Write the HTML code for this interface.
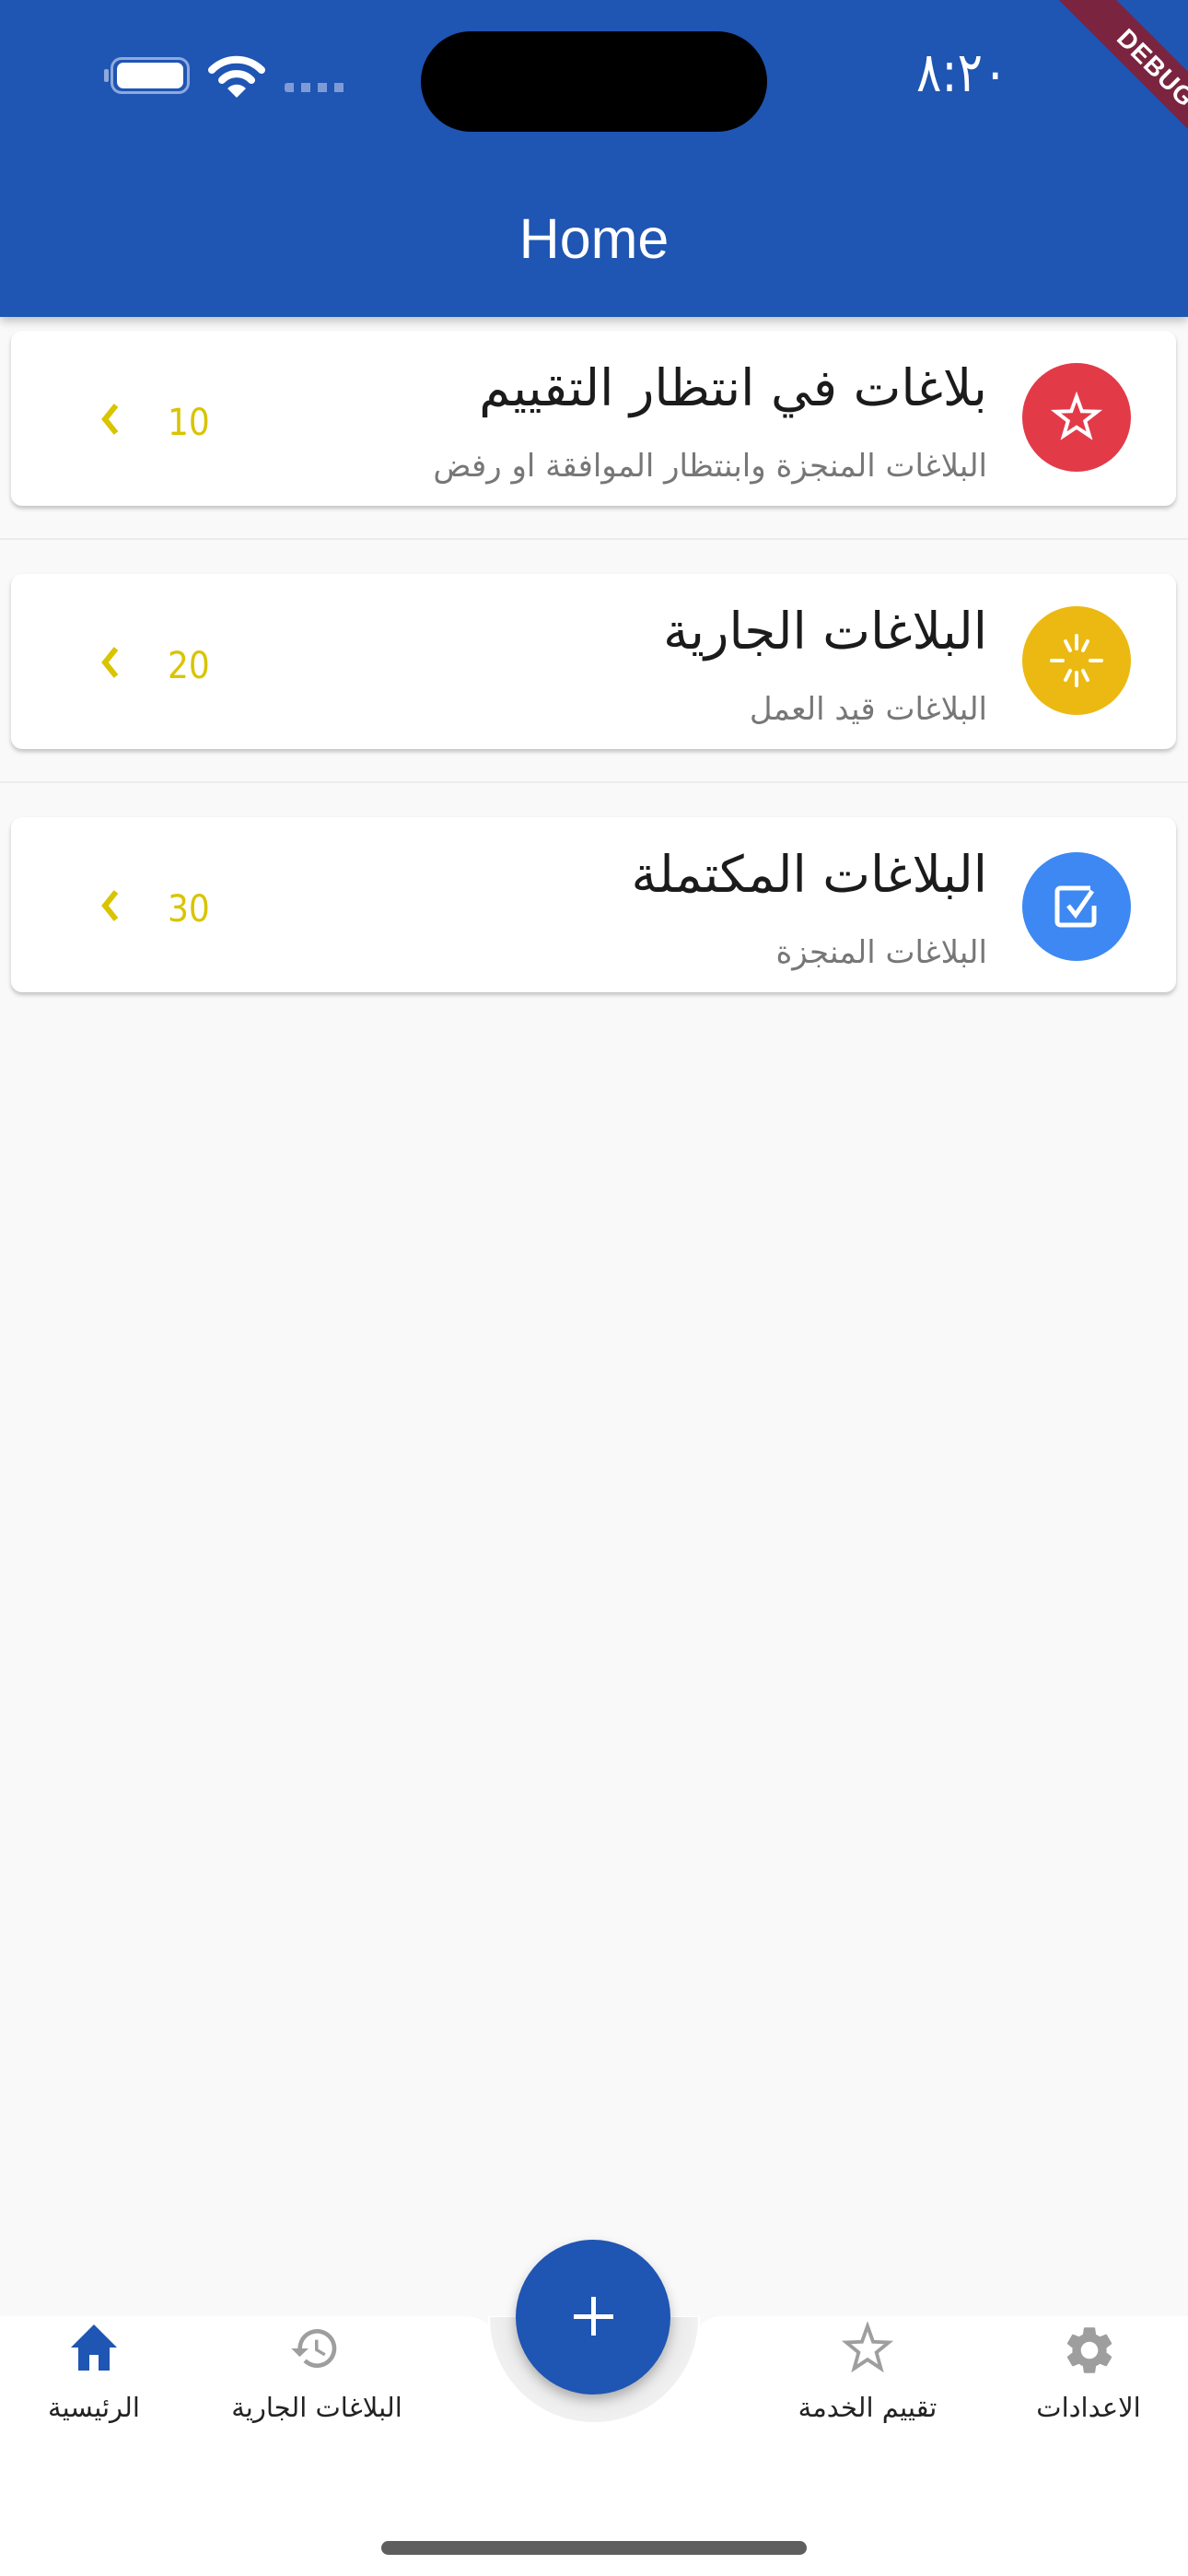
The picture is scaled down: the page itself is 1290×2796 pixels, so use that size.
<!DOCTYPE html>
<html><head><meta charset="utf-8">
<style>
*{margin:0;padding:0;box-sizing:border-box}
body{width:1290px;height:2796px;background:#f9f9f9;position:relative;overflow:hidden;font-family:"Liberation Sans","DejaVu Sans",sans-serif}
.abs{position:absolute}
.appbar{left:0;top:0;width:1290px;height:344px;background:#1f55b3;box-shadow:0 4px 10px rgba(0,0,0,.25);z-index:2;overflow:hidden}
.card{left:12px;width:1265px;height:190px;background:#fff;border-radius:12px;box-shadow:0 3px 5px rgba(0,0,0,.22)}
.div{left:0;width:1290px;height:2px;background:#ececec}
.title{right:218px;font-family:"DejaVu Sans",sans-serif;font-size:55px;line-height:70px;color:#1b1b1b;direction:rtl;white-space:nowrap}
.sub{right:218px;font-family:"DejaVu Sans",sans-serif;font-size:34px;line-height:44px;color:#777;direction:rtl;white-space:nowrap}
.num{left:182px;font-size:40px;color:#d9c400;font-family:"DejaVu Sans",sans-serif;transform:scaleX(.9);transform-origin:left}
.circ{width:118px;height:118px;border-radius:50%;left:1110px}
.lbl{font-family:"DejaVu Sans",sans-serif;font-size:29px;color:#222;white-space:nowrap;text-align:center;direction:rtl}
</style></head><body>
<div class="abs appbar">
  <div class="abs" style="left:457px;top:34px;width:376px;height:109px;background:#000;border-radius:55px"></div>
  <div class="abs" style="left:120px;top:62px;width:86px;height:40px;border:3px solid #8fa9db;border-radius:12px"></div>
  <div class="abs" style="left:127px;top:68px;width:72px;height:28px;background:#fff;border-radius:7px"></div>
  <div class="abs" style="left:113px;top:75px;width:5px;height:14px;background:#8fa9db;border-radius:2px"></div>
  <svg class="abs" style="left:226px;top:60px" width="62" height="48" viewBox="0 0 62 48"><path d="M4 16 A38 38 0 0 1 58 16" stroke="#fff" stroke-width="8" fill="none" stroke-linecap="round"/><path d="M15 27 A22 22 0 0 1 47 27" stroke="#fff" stroke-width="8" fill="none" stroke-linecap="round"/><path d="M31 46 L21 36 A14 14 0 0 1 41 36 Z" fill="#fff"/></svg>
  <div class="abs" style="left:309px;top:90px;width:66px;height:10px;background:repeating-linear-gradient(90deg,#7f9bd6 0 10px,transparent 10px 18px);border-radius:3px"></div>
  <div class="abs" style="left:995px;top:44px;font-family:'DejaVu Sans',sans-serif;font-size:60px;color:#fff;transform:scaleX(.85);transform-origin:left">٨:٢٠</div>
  <div class="abs" style="left:0;top:224px;width:1290px;text-align:center;font-size:61px;color:#fff">Home</div>
  <div class="abs" style="left:1095px;top:52px;width:320px;height:44px;background:#7a2440;transform:rotate(45deg);color:#fff;font-weight:bold;font-size:28px;text-align:center;line-height:44px;letter-spacing:1px">DEBUG</div>
</div>

<div class="abs card" style="top:359px"></div>
<div class="abs title" style="top:386px">بلاغات في انتظار التقييم</div>
<div class="abs sub" style="top:484px">البلاغات المنجزة وابنتظار الموافقة او رفض</div>
<div class="abs num" style="top:436px">10</div>
<svg class="abs" style="left:104px;top:434px" width="30" height="42" viewBox="0 0 30 42"><path d="M22 6 L10 21 L22 36" stroke="#d9c400" stroke-width="6" fill="none"/></svg>
<div class="abs circ" style="top:394px;background:#e33a48"></div>
<svg class="abs" style="left:1139px;top:423px" width="60" height="60" viewBox="0 0 24 24"><path d="M12 3 L14.3 9.3 L21 9.5 L15.7 13.6 L17.6 20 L12 16.3 L6.4 20 L8.3 13.6 L3 9.5 L9.7 9.3 Z" stroke="#fff" stroke-width="1.6" fill="none"/></svg>
<div class="abs div" style="top:584px"></div>

<div class="abs card" style="top:623px"></div>
<div class="abs title" style="top:650px">البلاغات الجارية</div>
<div class="abs sub" style="top:748px">البلاغات قيد العمل</div>
<div class="abs num" style="top:700px">20</div>
<svg class="abs" style="left:104px;top:698px" width="30" height="42" viewBox="0 0 30 42"><path d="M22 6 L10 21 L22 36" stroke="#d9c400" stroke-width="6" fill="none"/></svg>
<div class="abs circ" style="top:658px;background:#ebb912"></div>
<svg class="abs" style="left:1134px;top:682px" width="70" height="70" viewBox="0 0 70 70" stroke="#fff" stroke-width="4" stroke-linecap="round"><path d="M35 8 V22 M35 48 V62 M8 35 H20 M50 35 H62 M23 14 L28 24 M47 14 L42 24 M23 56 L28 46 M47 56 L42 46"/></svg>
<div class="abs div" style="top:848px"></div>

<div class="abs card" style="top:887px"></div>
<div class="abs title" style="top:914px">البلاغات المكتملة</div>
<div class="abs sub" style="top:1012px">البلاغات المنجزة</div>
<div class="abs num" style="top:964px">30</div>
<svg class="abs" style="left:104px;top:962px" width="30" height="42" viewBox="0 0 30 42"><path d="M22 6 L10 21 L22 36" stroke="#d9c400" stroke-width="6" fill="none"/></svg>
<div class="abs circ" style="top:925px;background:#3d88f2"></div>
<svg class="abs" style="left:1140px;top:955px" width="58" height="58" viewBox="0 0 58 58"><path d="M44 9 H12 Q8 9 8 13 V45 Q8 49 12 49 H44 Q48 49 48 45 V28" stroke="#fff" stroke-width="5" fill="none"/><path d="M20 28 L28 38 L46 12" stroke="#fff" stroke-width="5" fill="none"/></svg>

<!-- bottom nav -->
<div class="abs" style="left:0;top:2514px;width:540px;height:282px;background:#fff;border-radius:0 34px 0 0"></div>
<div class="abs" style="left:750px;top:2514px;width:540px;height:282px;background:#fff;border-radius:34px 0 0 0"></div>
<div class="abs" style="left:530px;top:2514px;width:230px;height:282px;background:#fff"></div>
<div class="abs" style="left:532px;top:2403px;width:226px;height:226px;border-radius:50%;background:radial-gradient(circle,#e2e2e2 40%,#f3f3f3 75%);clip-path:inset(112px 0 0 0)"></div>
<div class="abs" style="left:560px;top:2431px;width:168px;height:168px;border-radius:50%;background:#1f55b3;box-shadow:0 6px 12px rgba(0,0,0,.25)"></div>
<div class="abs" style="left:642px;top:2493px;width:5px;height:42px;background:#fff"></div>
<div class="abs" style="left:623px;top:2512px;width:43px;height:5px;background:#fff"></div>

<svg class="abs" style="left:72px;top:2520px" width="60" height="56" viewBox="0 0 60 56"><path d="M30 3 L5 28 H13 V53 H25 V36 H35 V53 H47 V28 H55 Z" fill="#1f55b3"/></svg>
<svg class="abs" style="left:310px;top:2521px" width="64" height="56" viewBox="0 0 24 24"><path d="M13 3a9 9 0 0 0-9 9H1l3.9 3.9L9 12H6a7 7 0 1 1 2.05 4.95l-1.42 1.42A9 9 0 1 0 13 3zm-1 5v5l4.28 2.54.72-1.21-3.5-2.08V8H12z" fill="#9e9e9e"/></svg>
<svg class="abs" style="left:912px;top:2520px" width="60" height="58" viewBox="0 0 24 24"><path d="M12 2 L14.5 9 L21.5 9.3 L16 13.8 L18 21 L12 17 L6 21 L8 13.8 L2.5 9.3 L9.5 9 Z" stroke="#9e9e9e" stroke-width="1.6" fill="none"/></svg>
<svg class="abs" style="left:1152px;top:2520px" width="62" height="62" viewBox="0 0 24 24"><path d="M19.14 12.94c.04-.3.06-.61.06-.94 0-.32-.02-.64-.07-.94l2.03-1.58a.49.49 0 0 0 .12-.61l-1.92-3.32a.488.488 0 0 0-.59-.22l-2.39.96c-.5-.38-1.030-.7-1.62-.94l-.36-2.54a.484.484 0 0 0-.48-.41h-3.84c-.24 0-.43.17-.47.41l-.36 2.54c-.59.24-1.13.57-1.62.94l-2.390-.96c-.22-.08-.47 0-.59.22L2.74 8.87c-.12.21-.08.47.12.61l2.03 1.58c-.05.3-.09.63-.09.94s.02.64.07.94l-2.03 1.58a.49.49 0 0 0-.12.61l1.92 3.32c.12.22.37.29.59.22l2.39-.96c.5.38 1.03.7 1.62.94l.36 2.54c.05.24.24.41.48.41h3.84c.24 0 .44-.17.47-.41l.36-2.54c.59-.24 1.13-.56 1.62-.94l2.39.96c.22.08.47 0 .59-.22l1.92-3.32c.12-.22.07-.47-.12-.61l-2.01-1.58zM12 15.6c-1.98 0-3.6-1.62-3.6-3.6s1.62-3.6 3.6-3.6 3.6 1.62 3.6 3.6-1.62 3.6-3.6 3.6z" fill="#9e9e9e"/></svg>

<div class="abs lbl" style="left:12px;top:2596px;width:180px">الرئيسية</div>
<div class="abs lbl" style="left:214px;top:2596px;width:260px">البلاغات الجارية</div>
<div class="abs lbl" style="left:822px;top:2596px;width:240px">تقييم الخدمة</div>
<div class="abs lbl" style="left:1092px;top:2596px;width:180px">الاعدادات</div>

<div class="abs" style="left:414px;top:2758px;width:462px;height:15px;border-radius:8px;background:#5e5e5e"></div>
</body></html>
